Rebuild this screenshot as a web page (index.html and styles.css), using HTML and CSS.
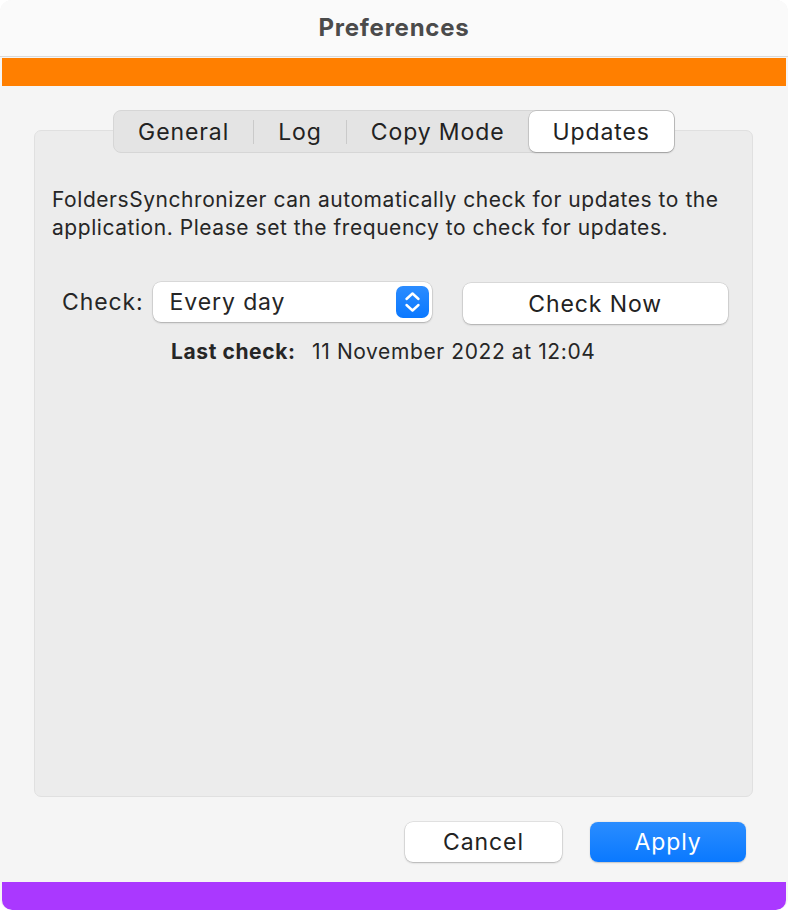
FILE: index.html
```html
<!DOCTYPE html>
<html>
<head>
<meta charset="utf-8">
<link rel="stylesheet" href="styles.css">
</head>
<body>
<div class="window">
  <div class="titlebar">Preferences</div>
  <div class="banner banner-orange"></div>
  <div class="content">
    <div class="tabview">
      <div class="tabs">
        <div class="tab">General</div>
        <div class="sep"></div>
        <div class="tab">Log</div>
        <div class="sep"></div>
        <div class="tab">Copy Mode</div>
        <div class="tab selected">Updates</div>
      </div>
      <div class="panel">
        <p class="desc">FoldersSynchronizer can automatically check for updates to the application. Please set the frequency to check for updates.</p>
        <div class="check-row">
          <span class="label">Check:</span>
          <div class="select">
            <span class="select-value">Every day</span>
            <span class="stepper">
              <svg width="33" height="32" viewBox="0 0 33 32"><path d="M10.5 13 L16.5 7.5 L22.5 13 M10.5 19 L16.5 24.5 L22.5 19" fill="none" stroke="#fff" stroke-width="2.4" stroke-linecap="round" stroke-linejoin="round"/></svg>
            </span>
          </div>
          <div class="button check-now">Check Now</div>
        </div>
        <div class="last-row">
          <span class="last-label">Last check:</span>
          <span class="last-value">11 November 2022 at 12:04</span>
        </div>
      </div>
    </div>
    <div class="actions">
      <div class="button cancel">Cancel</div>
      <div class="button primary">Apply</div>
    </div>
  </div>
  <div class="banner banner-purple"></div>
</div>
</body>
</html>
```
FILE: styles.css
```css
html, body {
  margin: 0;
  padding: 0;
  background: #ffffff;
}
body {
  width: 788px;
  height: 912px;
  font-family: Inter, "Noto Sans", "Liberation Sans", sans-serif;
  color: #262626;
}
.window {
  height: 910px;
  background: #f5f5f5;
  border-radius: 12px;
  overflow: hidden;
  display: flex;
  flex-direction: column;
}
.titlebar {
  height: 57px;
  flex: none;
  background: #fafafa;
  border-bottom: 1px solid #d9d9d9;
  display: flex;
  align-items: center;
  justify-content: center;
  font-size: 24px;
  letter-spacing: 0.75px;
  font-weight: 700;
  color: #4b4b4b;
  padding-bottom: 2px;
  box-sizing: border-box;
}
.banner {
  flex: none;
  height: 28px;
  margin: 0 2px;
}
.banner-orange {
  margin-top: 1px;
  background: #ff7f00;
}
.banner-purple {
  background: #aa38ff;
  border-radius: 0 0 10px 10px;
}
.content {
  flex: 1;
  display: flex;
  flex-direction: column;
  padding: 24px 35px 0 34px;
}
.tabview {
  display: flex;
  flex-direction: column;
}
.tabs {
  align-self: center;
  position: relative;
  z-index: 1;
  display: flex;
  align-items: center;
  height: 41px;
  margin-left: 1px;
  background: #e4e4e4;
  border: 1px solid #d6d6d6;
  border-radius: 8px;
  font-size: 23px;
  letter-spacing: 0.9px;
  color: #222;
}
.tab {
  height: 41px;
  display: flex;
  align-items: center;
  padding: 0 24px;
}
.tab.selected {
  background: #ffffff;
  border-radius: 7px;
  box-shadow: 0 0 0 0.5px rgba(0,0,0,0.18), 0 1px 2px rgba(0,0,0,0.2);
}
.sep {
  width: 1px;
  height: 24px;
  background: #cacaca;
}
.panel {
  margin-top: -23px;
  height: 643px;
  padding-top: 22px;
  background: #ececec;
  border: 1px solid #e0e0e0;
  border-radius: 7px;
}
.desc {
  margin: 33px 0 0 17px;
  font-size: 21px;
  letter-spacing: 0.55px;
  line-height: 28px;
  width: 700px;
}
.check-row {
  display: flex;
  align-items: center;
  margin: 38px 0 0 27px;
  font-size: 23px;
  letter-spacing: 0.9px;
}
.label {
  margin-right: 9px;
}
.select {
  width: 279px;
  height: 40px;
  box-sizing: border-box;
  display: flex;
  align-items: center;
  justify-content: space-between;
  padding: 0 3px 0 17px;
  background: #fff;
  border-radius: 8px;
  box-shadow: 0 0 0 0.5px rgba(0,0,0,0.14), 0 1px 2px rgba(0,0,0,0.22);
}
.stepper {
  width: 33px;
  height: 32px;
  border-radius: 7px;
  background: linear-gradient(#2b8cff, #0a78ff);
  display: flex;
  align-items: center;
  justify-content: center;
}
.stepper svg {
  display: block;
}
.button {
  box-sizing: border-box;
  display: flex;
  align-items: center;
  justify-content: center;
  background: #fff;
  border-radius: 8px;
  box-shadow: 0 0 0 0.5px rgba(0,0,0,0.14), 0 1px 2px rgba(0,0,0,0.22);
  font-size: 23px;
  letter-spacing: 0.9px;
  color: #222;
}
.check-now {
  width: 265px;
  height: 41px;
  margin-left: 31px;
  margin-top: 3px;
}
.last-row {
  margin: 14px 0 0 136px;
  font-size: 21px;
  letter-spacing: 0.6px;
  line-height: 28px;
}
.last-label {
  font-weight: 700;
  margin-right: 10px;
}
.actions {
  display: flex;
  justify-content: flex-end;
  gap: 28px;
  margin-top: 25px;
  padding-right: 7px;
}
.cancel {
  width: 157px;
  height: 40px;
}
.primary {
  width: 156px;
  height: 40px;
  background: linear-gradient(#2a8dff, #0a79ff);
  color: #fff;
  box-shadow: 0 0.5px 1.5px rgba(0,0,0,0.2);
}
```
